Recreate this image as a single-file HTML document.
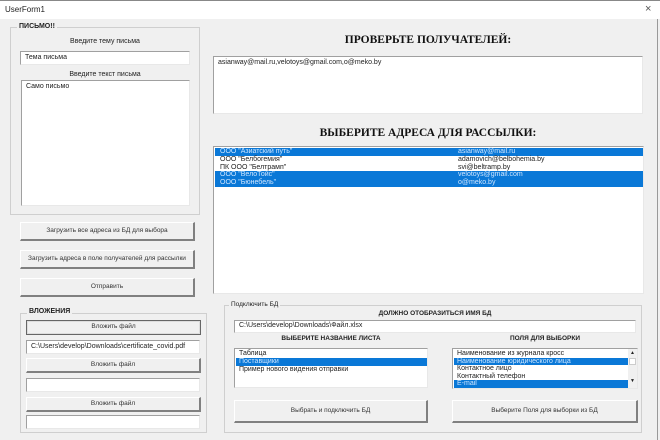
<!DOCTYPE html>
<html><head><meta charset="utf-8"><style>
*{margin:0;padding:0;box-sizing:border-box}
body{width:660px;height:440px;background:#f0f0f0;font-family:"Liberation Sans","DejaVu Sans",sans-serif;font-size:7px;color:#222;position:relative;overflow:hidden}
.a{position:absolute}
.tb{left:0;top:0;width:660px;height:19px;background:#fff;border-top:1px solid #888}
.fr{border:1px solid #cfcfcf}
.lg{background:#f0f0f0;padding:0 2px;font-weight:bold;font-size:7px;color:#222}
.in{background:#fff;border:1px solid #a0a0a0;border-right-color:#e8e8e8;border-bottom-color:#e8e8e8;padding:2px 4px;white-space:nowrap;overflow:hidden}
.bt{background:#f0f0f0;border:1px solid #fff;border-right:2px solid #808080;border-bottom:2px solid #808080;text-align:center;font-size:6.5px;color:#333}
.c{text-align:center}
.sel{background:#0a78d7;color:#cfe6ff}
.row{height:7.8px;line-height:7.8px;padding-left:5px;white-space:nowrap;position:relative}
.h{font-family:"Liberation Serif",serif;font-weight:bold;font-size:11.5px;color:#111;text-align:center}
</style></head><body>
<div class="a tb"><span class="a" style="left:5px;top:4px;font-size:8px;color:#222">UserForm1</span><span class="a" style="left:645px;top:2px;font-size:11px;color:#555">×</span></div>
<div class="a" style="left:657px;top:19px;width:1px;height:421px;background:#999"></div>

<div class="a fr" style="left:10px;top:27px;width:190px;height:188px"></div>
<div class="a lg" style="left:17px;top:23px">ПИСЬМО!!</div>
<div class="a c" style="left:20px;top:38px;width:170px">Введите тему письма</div>
<div class="a in" style="left:20px;top:51px;width:170px;height:14px">Тема письма</div>
<div class="a c" style="left:20px;top:71px;width:170px">Введите текст письма</div>
<div class="a in" style="left:21px;top:80px;width:169px;height:126px">Само письмо</div>

<div class="a bt" style="left:20px;top:222px;width:175px;height:19px;line-height:16px">Загрузить все адреса из БД для выбора</div>
<div class="a bt" style="left:20px;top:250px;width:175px;height:19px;line-height:16px">Загрузить адреса в поле получателей для рассылки</div>
<div class="a bt" style="left:20px;top:278px;width:175px;height:19px;line-height:16px">Отправить</div>

<div class="a fr" style="left:20px;top:313px;width:187px;height:120px"></div>
<div class="a lg" style="left:27px;top:308px">ВЛОЖЕНИЯ</div>
<div class="a bt" style="left:26px;top:320px;width:175px;height:15px;line-height:12px;border:1px solid #666;box-shadow:inset 0 0 0 1px #ddd">Вложить файл</div>
<div class="a in" style="left:26px;top:340px;width:174px;height:14px">C:\Users\develop\Downloads\certificate_covid.pdf</div>
<div class="a bt" style="left:26px;top:358px;width:175px;height:15px;line-height:12px">Вложить файл</div>
<div class="a in" style="left:26px;top:378px;width:174px;height:14px"></div>
<div class="a bt" style="left:26px;top:397px;width:175px;height:15px;line-height:12px">Вложить файл</div>
<div class="a in" style="left:26px;top:415px;width:174px;height:14px"></div>

<div class="a h" style="left:213px;top:34px;width:430px">ПРОВЕРЬТЕ ПОЛУЧАТЕЛЕЙ:</div>
<div class="a in" style="left:213px;top:56px;width:430px;height:58px">asianway@mail.ru,velotoys@gmail.com,o@meko.by</div>
<div class="a h" style="left:213px;top:127px;width:430px">ВЫБЕРИТЕ АДРЕСА ДЛЯ РАССЫЛКИ:</div>
<div class="a in" style="left:213px;top:146px;width:431px;height:148px;padding:1px 0 0 1px">
<div class="row sel">ООО "Азиатский путь"<span class="a" style="left:243px">asianway@mail.ru</span></div>
<div class="row">ООО "Белбогемия"<span class="a" style="left:243px">adamovich@belbohemia.by</span></div>
<div class="row">ПК ООО "Белтрамп"<span class="a" style="left:243px">svi@beltramp.by</span></div>
<div class="row sel">ООО "ВелоТойс"<span class="a" style="left:243px">velotoys@gmail.com</span></div>
<div class="row sel">ООО "Бюнебель"<span class="a" style="left:243px">o@meko.by</span></div>
</div>

<div class="a fr" style="left:224px;top:305px;width:418px;height:128px"></div>
<div class="a" style="left:229px;top:301px;background:#f0f0f0;padding:0 2px;font-size:6.5px">Подключить БД</div>
<div class="a c" style="left:234px;top:310px;width:402px;font-weight:bold;font-size:6.5px">ДОЛЖНО ОТОБРАЗИТЬСЯ ИМЯ БД</div>
<div class="a in" style="left:234px;top:320px;width:402px;height:13px;padding-top:1px">C:\Users\develop\Downloads\Файл.xlsx</div>
<div class="a c" style="left:234px;top:335px;width:194px;font-weight:bold;font-size:6.5px">ВЫБЕРИТЕ НАЗВАНИЕ ЛИСТА</div>
<div class="a c" style="left:452px;top:335px;width:186px;font-weight:bold;font-size:6.5px">ПОЛЯ ДЛЯ ВЫБОРКИ</div>
<div class="a in" style="left:234px;top:348px;width:194px;height:40px;padding:1px 0 0 1px">
<div class="row" style="padding-left:3px">Таблица</div>
<div class="row sel" style="padding-left:3px">Поставщики</div>
<div class="row" style="padding-left:3px">Пример нового видения отправки</div>
</div>
<div class="a in" style="left:452px;top:348px;width:186px;height:41px;padding:1px 0 0 1px">
<div class="row" style="padding-left:3px;width:174px;height:7.5px;line-height:7.5px">Наименование из журнала кросс</div>
<div class="row sel" style="padding-left:3px;width:174px;height:7.5px;line-height:7.5px">Наименование юридического лица</div>
<div class="row" style="padding-left:3px;width:174px;height:7.5px;line-height:7.5px">Контактное лицо</div>
<div class="row" style="padding-left:3px;width:174px;height:7.5px;line-height:7.5px">Контактный телефон</div>
<div class="row sel" style="padding-left:3px;width:174px;height:7.5px;line-height:7.5px">E-mail</div>
<div class="a" style="right:0;top:0;width:9px;height:39px;background:#f0f0f0;font-size:5px;text-align:center;line-height:9px">▲<div style="height:7px;background:#fff;border:1px solid #ccc;margin:0 1px"></div><div style="margin-top:12px">▼</div></div>
</div>
<div class="a bt" style="left:234px;top:400px;width:194px;height:23px;line-height:20px">Выбрать и подключить БД</div>
<div class="a bt" style="left:452px;top:400px;width:186px;height:23px;line-height:20px">Выберите Поля для выборки из БД</div>
</body></html>
